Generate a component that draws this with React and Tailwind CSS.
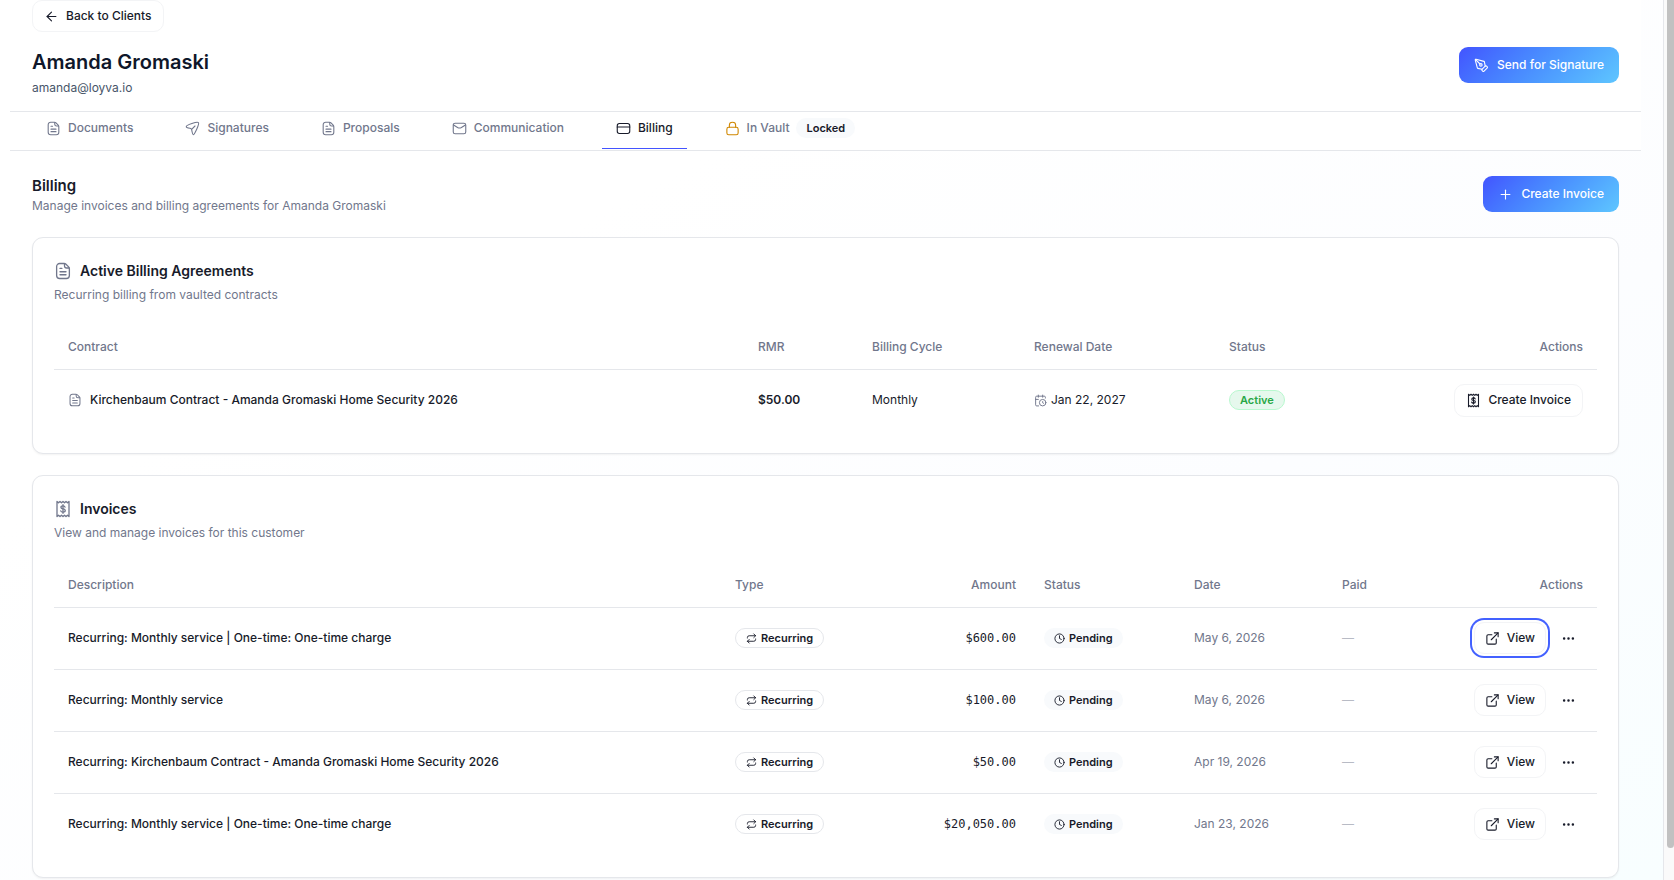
import { ArrowLeft, CalendarClock, Clock, Ellipsis, ExternalLink, PenTool, Plus, Repeat } from "lucide-react"

const invoices = [
  { id: 1, description: "Recurring: Monthly service | One-time: One-time charge", amount: "$600.00", date: "May 6, 2026", focused: true },
  { id: 2, description: "Recurring: Monthly service", amount: "$100.00", date: "May 6, 2026" },
  { id: 3, description: "Recurring: Kirchenbaum Contract - Amanda Gromaski Home Security 2026", amount: "$50.00", date: "Apr 19, 2026" },
  { id: 4, description: "Recurring: Monthly service | One-time: One-time charge", amount: "$20,050.00", date: "Jan 23, 2026" },
]

export default function App() {
  return (
    <div className="flex h-screen overflow-hidden bg-white font-[Inter,sans-serif] text-xs leading-5 text-[#181b2a]">
      <div className="min-w-0 flex-1 bg-linear-to-br from-white from-30% via-[#fcfdff] via-65% to-[#f8feff] pr-[22px] pl-[10px]">
        <header className="bg-white">
          <div className="px-[22px]">
            <button className="flex h-8 items-center gap-[7px] rounded-[10px] border border-[#f3f4f6] bg-white px-[11px] font-medium">
              <ArrowLeft className="size-[15px]" strokeWidth={1.75} />
              Back to Clients
            </button>
            <div className="flex items-start justify-between pt-[15px] pb-[13px]">
              <div>
                <h1 className="text-xl leading-[30px] font-semibold text-[#0f172a]">Amanda Gromaski</h1>
                <p className="pt-px text-[#475569]">amanda@loyva.io</p>
              </div>
              <PrimaryButton icon={PenTool}>Send for Signature</PrimaryButton>
            </div>
          </div>
          <nav className="flex h-10 gap-6 border-y border-[#e5e7eb] px-[22px]">
            <Tab icon={DocumentIcon}>Documents</Tab>
            <Tab icon={PlaneIcon}>Signatures</Tab>
            <Tab icon={DocumentIcon}>Proposals</Tab>
            <Tab icon={MailIcon}>Communication</Tab>
            <Tab icon={CardIcon} active>Billing</Tab>
            <Tab icon={LockIcon} iconClass="text-[#d08700]">
              In Vault
              <span className="rounded-full bg-[#f8fafc] px-[10px] text-[11px] font-semibold text-[#181b2a]">Locked</span>
            </Tab>
          </nav>
        </header>

        <main className="flex flex-col gap-[21px] px-[22px] pt-[25px]">
          <div className="flex items-start justify-between">
            <div>
              <h2 className="text-[15px] leading-5 font-semibold">Billing</h2>
              <p className="text-[#71778c]">Manage invoices and billing agreements for Amanda Gromaski</p>
            </div>
            <PrimaryButton icon={Plus}>Create Invoice</PrimaryButton>
          </div>

          <Card icon={DocumentIcon} title="Active Billing Agreements" subtitle="Recurring billing from vaulted contracts">
            <table className="w-full table-fixed text-left">
              <thead className="h-[46px] text-[#71778c]">
                <tr className="border-b border-[#e5e7eb]">
                  <th className="px-[14px] pt-0.5 font-medium">Contract</th>
                  <th className="w-[114px] px-[14px] pt-0.5 font-medium">RMR</th>
                  <th className="w-[162px] px-[14px] pt-0.5 font-medium">Billing Cycle</th>
                  <th className="w-[195px] px-[14px] pt-0.5 font-medium">Renewal Date</th>
                  <th className="w-[160px] px-[14px] pt-0.5 font-medium">Status</th>
                  <th className="w-[222px] px-[14px] pt-0.5 text-right font-medium">Actions</th>
                </tr>
              </thead>
              <tbody>
                <tr className="h-[62px]">
                  <td className="px-[14px] font-medium">
                    <span className="flex items-center gap-2">
                      <DocumentIcon className="size-[14px] text-[#71778c]" />
                      Kirchenbaum Contract - Amanda Gromaski Home Security 2026
                    </span>
                  </td>
                  <td className="px-[14px] font-semibold">$50.00</td>
                  <td className="px-[14px]">Monthly</td>
                  <td className="px-[14px]">
                    <span className="flex items-center gap-1">
                      <CalendarClock className="size-[13px] text-[#71778c]" strokeWidth={1.75} />
                      Jan 22, 2027
                    </span>
                  </td>
                  <td className="px-[14px]">
                    <span className="inline-block rounded-full border border-[#b9f8cf] bg-[#e6f8ed] px-[10px] text-[11px] leading-[18px] font-semibold text-[#28a745]">
                      Active
                    </span>
                  </td>
                  <td className="px-[14px]">
                    <button className="ml-auto flex h-[33px] items-center gap-[7px] rounded-[10px] border border-[#f3f4f6] bg-white px-[11px] font-medium">
                      <ReceiptIcon className="size-[15px]" />
                      Create Invoice
                    </button>
                  </td>
                </tr>
              </tbody>
            </table>
          </Card>

          <Card icon={ReceiptIcon} title="Invoices" subtitle="View and manage invoices for this customer">
            <table className="w-full table-fixed text-left">
              <thead className="h-[46px] text-[#71778c]">
                <tr className="border-b border-[#e5e7eb]">
                  <th className="px-[14px] pt-0.5 font-medium">Description</th>
                  <th className="w-[160px] px-[14px] pt-0.5 font-medium">Type</th>
                  <th className="w-[149px] px-[14px] pt-0.5 text-right font-medium">Amount</th>
                  <th className="w-[150px] px-[14px] pt-0.5 font-medium">Status</th>
                  <th className="w-[148px] px-[14px] pt-0.5 font-medium">Date</th>
                  <th className="w-[100px] px-[14px] pt-0.5 font-medium">Paid</th>
                  <th className="w-[169px] px-[14px] pt-0.5 text-right font-medium">Actions</th>
                </tr>
              </thead>
              <tbody className="divide-y divide-[#e5e7eb]">
                {invoices.map((invoice) => (
                  <tr key={invoice.id} className="h-[62px]">
                    <td className="px-[14px] font-medium">{invoice.description}</td>
                    <td className="px-[14px]">
                      <span className="flex w-fit items-center gap-1 rounded-full border border-[#e5e7eb] px-[10px] text-[11px] leading-[18px] font-semibold">
                        <Repeat className="size-[11px]" />
                        Recurring
                      </span>
                    </td>
                    <td className="px-[14px] text-right font-['DejaVu_Sans_Mono',monospace]">{invoice.amount}</td>
                    <td className="px-[14px]">
                      <span className="flex w-fit items-center gap-1 rounded-full bg-[#f8fafc] px-[10px] text-[11px] font-semibold">
                        <Clock className="size-[11px]" />
                        Pending
                      </span>
                    </td>
                    <td className="px-[14px] text-[#71778c]">{invoice.date}</td>
                    <td className="px-[14px] text-[#b8bbc5]">—</td>
                    <td className="px-[14px]">
                      <div className="flex items-center justify-end gap-[7px]">
                        <button
                          className={
                            invoice.focused
                              ? "flex h-8 items-center gap-[7px] rounded-[10px] border border-[#f3f4f6] bg-white px-[10px] font-medium ring-2 ring-[#4361ff] ring-offset-2"
                              : "flex h-8 items-center gap-[7px] rounded-[10px] border border-[#f3f4f6] bg-white px-[10px] font-medium"
                          }
                        >
                          <ExternalLink className="size-[15px]" strokeWidth={1.75} />
                          View
                        </button>
                        <button aria-label="More actions" className="flex size-[30px] items-center justify-center">
                          <Ellipsis className="size-[15px]" />
                        </button>
                      </div>
                    </td>
                  </tr>
                ))}
              </tbody>
            </table>
          </Card>
        </main>
      </div>
      <div className="w-[11px] border-l border-[#e5e7eb] bg-[#fafafa] pl-[3px]">
        <div className="h-[96.4%] rounded-b-sm bg-[#c1c1c1]" />
      </div>
    </div>
  )
}

function PrimaryButton({ icon: Icon, children }) {
  return (
    <button className="flex h-9 items-center gap-2 rounded-[9px] bg-linear-135 from-[#4353ff] to-[#5fc6ff] px-[15px] font-medium text-white">
      <Icon className="size-[15px]" strokeWidth={1.75} />
      {children}
    </button>
  )
}

function Tab({ icon: Icon, iconClass, active, children }) {
  return (
    <button
      className={
        active
          ? "flex h-[37px] items-start gap-[7px] border-b border-[#4353ff] px-[14px] pt-[6px] font-medium"
          : "flex h-[37px] items-start gap-[7px] px-[14px] pt-[6px] font-medium text-[#71778c]"
      }
    >
      <span className={iconClass}>
        <Icon className="my-[3px] size-[15px]" />
      </span>
      {children}
    </button>
  )
}

function Card({ icon: Icon, title, subtitle, children }) {
  return (
    <section className="rounded-[11px] border border-[#e5e7eb] bg-white px-[21px] pb-[22px] shadow-xs">
      <div className="pt-[21px] pb-[18px]">
        <h3 className="flex items-center gap-2 text-sm leading-6 font-semibold">
          <Icon className="size-[18px] text-[#71778c]" />
          {title}
        </h3>
        <p className="pt-0.5 text-[#71778c]">{subtitle}</p>
      </div>
      {children}
    </section>
  )
}

function Svg({ children, ...props }) {
  return (
    <svg
      xmlns="http://www.w3.org/2000/svg"
      width="24"
      height="24"
      viewBox="0 0 24 24"
      fill="none"
      stroke="currentColor"
      strokeWidth="1.75"
      strokeLinecap="round"
      strokeLinejoin="round"
      {...props}
    >
      {children}
    </svg>
  )
}

function DocumentIcon(props) {
  return (
    <Svg {...props}>
      <path d="M13.5 2h-6a4 4 0 0 0-4 4v12a4 4 0 0 0 4 4h9a4 4 0 0 0 4-4V9c0-1-.4-1.8-1-2.5L16 3c-.7-.7-1.500-1-2.500-1Z" />
      <path d="M14 2.500V5a3 3 0 0 0 3 3h3" />
      <path d="M8 8.500h2.500M8 13h8M8 17h8" />
    </Svg>
  )
}

function PlaneIcon(props) {
  return (
    <Svg {...props}>
      <path d="M21.5 2.5C19.5.5 2 6.700 2 9c0 2 5.600 2.600 7.100 3 .9.300 1.200.5 1.400 1.500 1 4.200 1.500 8.400 2.600 8.500 1.800.1 10.400-17.500 8.400-19.500Z" />
      <path d="m11 13 5-5" />
    </Svg>
  )
}

function MailIcon(props) {
  return (
    <Svg {...props}>
      <rect x="2" y="3.5" width="20" height="17" rx="3" />
      <path d="m2.5 6.5 6.400 3.800c2.500 1.500 3.700 1.500 6.200 0l6.400-3.800" />
    </Svg>
  )
}

function CardIcon(props) {
  return (
    <Svg {...props}>
      <rect x="2" y="4" width="20" height="16" rx="3.5" />
      <path d="M2 9.5h20" />
    </Svg>
  )
}

function LockIcon(props) {
  return (
    <Svg {...props}>
      <rect x="3" y="10" width="18" height="12" rx="3" />
      <path d="M7 10V6.500a5 4.500 0 0 1 10 0V10" />
    </Svg>
  )
}

function ReceiptIcon(props) {
  return (
    <Svg {...props}>
      <path d="M4 2v20l2-1.800 2 1.800 2-1.800 2 1.800 2-1.800 2 1.800 2-1.800 2 1.800V2l-2 1.800L16 2l-2 1.800L12 2l-2 1.800L8 2 6 3.800Z" />
      <path d="M14.700 9.500c-.3-1-1.300-1.700-2.700-1.700-1.600 0-2.800.8-2.800 2s1 1.900 2.800 2.100c1.900.2 3 .9 3 2.200s-1.300 2.100-3 2.100c-1.500 0-2.700-.7-3-1.800" />
      <path d="M12 6.300v11.400" />
    </Svg>
  )
}
